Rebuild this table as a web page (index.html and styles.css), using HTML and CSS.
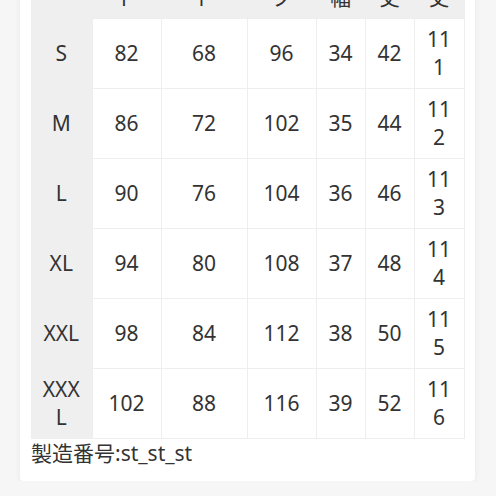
FILE: index.html
```html
<!DOCTYPE html>
<html lang="ja">
<head>
<meta charset="utf-8">
<link rel="stylesheet" href="styles.css">
</head>
<body>
<div class="card">
  <table class="size-table">
    <colgroup>
      <col class="c0"><col class="c1"><col class="c2"><col class="c3"><col class="c4"><col class="c5"><col class="c6">
    </colgroup>
    <thead>
      <tr><th class="corner">サイズ</th><th>バスト</th><th>ウエスト</th><th>ヒップ</th><th>肩幅</th><th>袖丈</th><th>着丈</th></tr>
    </thead>
    <tbody>
      <tr><th>S</th><td>82</td><td>68</td><td>96</td><td>34</td><td>42</td><td>111</td></tr>
      <tr><th>M</th><td>86</td><td>72</td><td>102</td><td>35</td><td>44</td><td>112</td></tr>
      <tr><th>L</th><td>90</td><td>76</td><td>104</td><td>36</td><td>46</td><td>113</td></tr>
      <tr><th>XL</th><td>94</td><td>80</td><td>108</td><td>37</td><td>48</td><td>114</td></tr>
      <tr><th>XXL</th><td>98</td><td>84</td><td>112</td><td>38</td><td>50</td><td>115</td></tr>
      <tr><th>XXXL</th><td>102</td><td>88</td><td>116</td><td>39</td><td>52</td><td>116</td></tr>
    </tbody>
  </table>
  <p class="note">製造番号:st_st_st</p>
</div>
</body>
</html>
```
FILE: styles.css
```css
html, body {
  margin: 0;
  padding: 0;
  background: #f6f6f6;
}
body {
  font-family: "Noto Sans", "Noto Sans CJK JP", sans-serif;
  font-size: 21px;
  line-height: 28px;
  color: #333333;
}
.card {
  margin: -62px 21px 0 20px;
  padding: 11px 11px 14px 11px;
  background: #ffffff;
  border-radius: 4px;
  box-shadow: 0 2px 6px rgba(0, 0, 0, 0.06);
}
.size-table {
  width: 433px;
  table-layout: fixed;
  border-collapse: collapse;
  background: #efefef;
}
.c0 { width: 61px; }
.c1 { width: 69px; }
.c2 { width: 86px; }
.c3 { width: 69px; }
.c4 { width: 49px; }
.c5 { width: 49px; }
.c6 { width: 50px; }
.size-table th,
.size-table td {
  padding: 6px 9px 7px 9px;
  text-align: center;
  vertical-align: middle;
  font-weight: normal;
  word-break: break-all;
}
.size-table th.corner {
  white-space: nowrap;
  word-break: normal;
}
.size-table thead th {
  background: #efefef;
}
.size-table tbody th {
  background: #efefef;
}
.size-table td {
  background: #ffffff;
  border: 1px solid #eeeeee;
}
.note {
  margin: 0;
}
```
